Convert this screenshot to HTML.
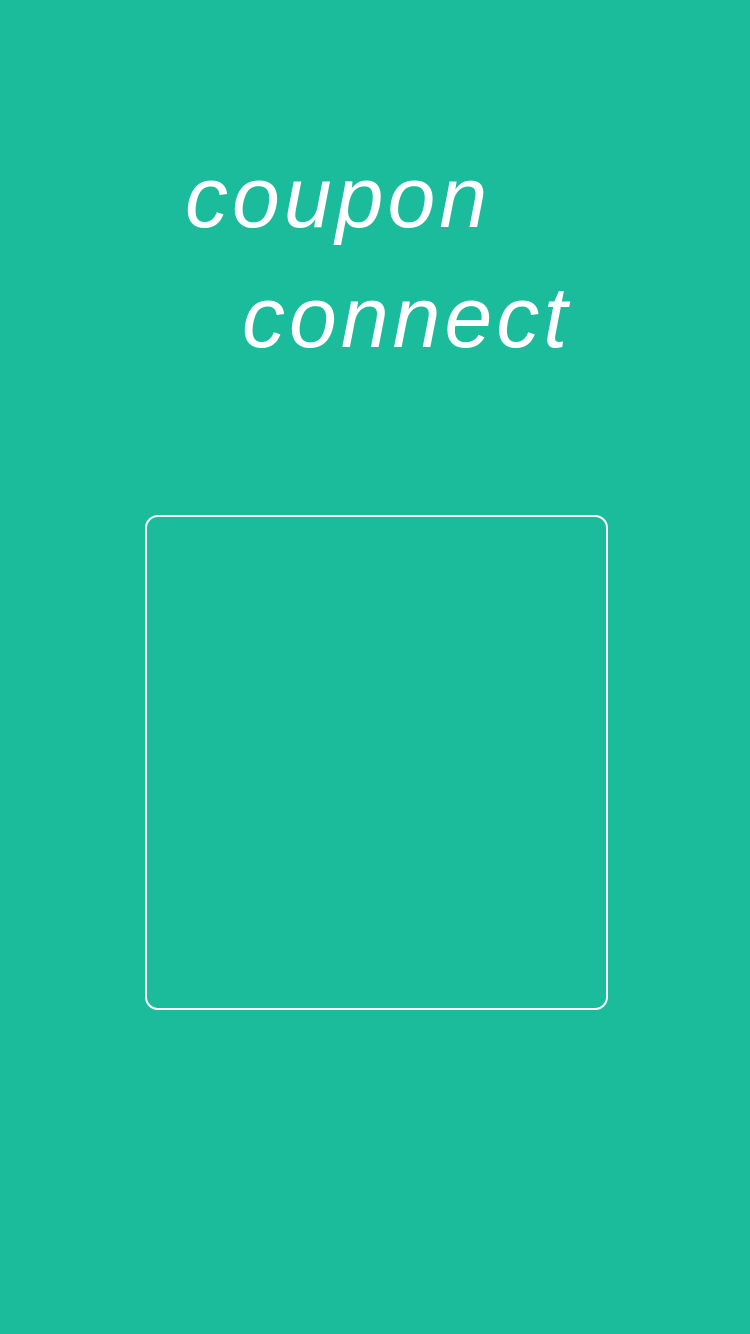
<!DOCTYPE html>
<html>
<head>
<meta charset="utf-8">
<style>
  html,body{margin:0;padding:0;}
  body{width:750px;height:1334px;background:#1bbc9b;position:relative;overflow:hidden;
       font-family:"Liberation Sans",sans-serif;color:#fff;}
  .t{position:absolute;font-style:italic;font-size:86px;letter-spacing:4px;line-height:1;white-space:nowrap;font-weight:normal;}
  .box{position:absolute;left:145px;top:515px;width:459px;height:491px;border:2px solid #fff;border-radius:13px;}
</style>
</head>
<body>
  <div class="t" style="left:185px;top:155px;">coupon</div>
  <div class="t" style="left:242px;top:275px;">connect</div>
  <div class="box"></div>
</body>
</html>
